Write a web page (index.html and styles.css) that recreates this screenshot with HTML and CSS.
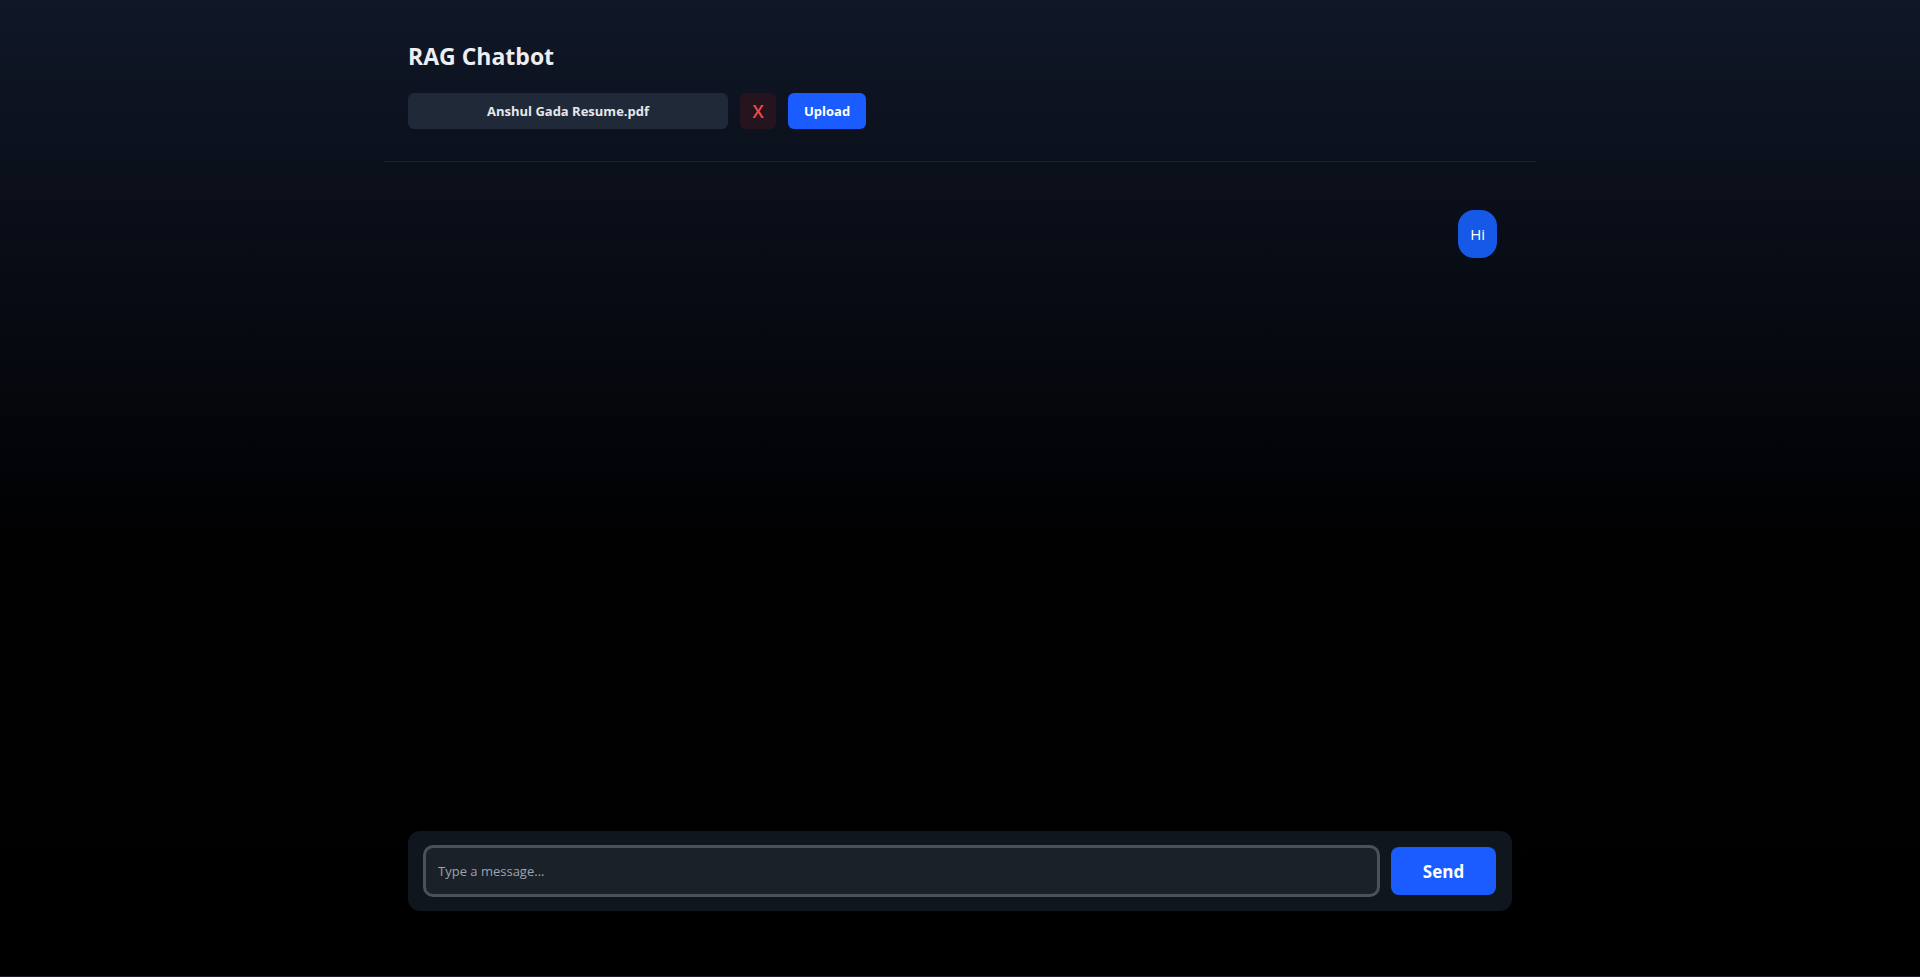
FILE: index.html
```html
<!DOCTYPE html>
<html lang="en">
<head>
<meta charset="utf-8">
<title>RAG Chatbot</title>
<link rel="stylesheet" href="styles.css">
</head>
<body>
<div class="app">
  <header class="header">
    <h1 class="title">RAG Chatbot</h1>
    <div class="file-row">
      <div class="file-name">Anshul Gada Resume.pdf</div>
      <button class="remove-btn">X</button>
      <button class="upload-btn">Upload</button>
    </div>
  </header>
  <main class="messages">
    <div class="msg-row user">
      <div class="bubble">Hi</div>
    </div>
  </main>
  <form class="composer">
    <input class="msg-input" type="text" placeholder="Type a message...">
    <button class="send-btn" type="button">Send</button>
  </form>
</div>
</body>
</html>
```

FILE: styles.css
```css
* { box-sizing: border-box; }
html, body { margin: 0; padding: 0; height: 100%; }
body {
  font-family: "Open Sans", "Noto Sans", "Liberation Sans", sans-serif;
  background: linear-gradient(180deg, #101727 0%, #070b13 30%, #010102 55%, #000000 100%);
  color: #e5e7eb;
  border-bottom: 1px solid #1f1b29;
}
.app {
  max-width: 1152px;
  margin: 0 auto;
  height: 976px;
  display: flex;
  flex-direction: column;
}
.header {
  padding: 40px 24px 32px;
  border-bottom: 1px solid #1a2130;
}
.title {
  margin: 0;
  font-size: 23px;
  line-height: 32px;
  font-weight: 700;
  color: #eceef2;
}
.file-row {
  margin-top: 21px;
  display: flex;
  gap: 12px;
}
.file-name {
  width: 320px;
  height: 36px;
  border-radius: 6px;
  background: #1f2937;
  color: #e5e7eb;
  font-size: 13px;
  font-weight: 700;
  display: flex;
  align-items: center;
  justify-content: center;
}
.remove-btn {
  width: 36px;
  height: 36px;
  border: none;
  border-radius: 6px;
  background: #25141d;
  color: #f04848;
  font-family: inherit;
  font-size: 18px;
  font-weight: 600;
  padding: 0;
  cursor: pointer;
}
.upload-btn {
  height: 36px;
  padding: 0 16px;
  border: none;
  border-radius: 6px;
  background: #1a5cff;
  color: #ffffff;
  font-family: inherit;
  font-size: 13px;
  font-weight: 700;
  cursor: pointer;
}
.messages {
  flex: 1;
  padding: 48px 39px 0 24px;
  display: flex;
  flex-direction: column;
  gap: 12px;
}
.msg-row { display: flex; }
.msg-row.user { justify-content: flex-end; }
.bubble {
  background: #1659e7;
  color: #ffffff;
  font-size: 15px;
  line-height: 24px;
  padding: 12px 12px;
  border-radius: 16px;
}
.composer {
  margin: 0 24px 65px;
  padding: 16px;
  background: #10161d;
  border-radius: 12px;
  display: flex;
  gap: 13px;
}
.msg-input {
  flex: 1;
  height: 48px;
  background: #1b2129;
  border: 1px solid #2c3038;
  outline: 3px solid #4f5054;
  outline-offset: -1px;
  border-radius: 8px;
  padding: 0 12px;
  color: #e5e7eb;
  font-family: inherit;
  font-size: 13px;
  margin-left: 1px;
}
.msg-input::placeholder { color: #9ca3af; }
.send-btn {
  width: 105px;
  height: 48px;
  border: none;
  border-radius: 8px;
  background: #1a5cff;
  color: #ffffff;
  font-family: inherit;
  font-size: 17px;
  font-weight: 700;
  cursor: pointer;
}
```
